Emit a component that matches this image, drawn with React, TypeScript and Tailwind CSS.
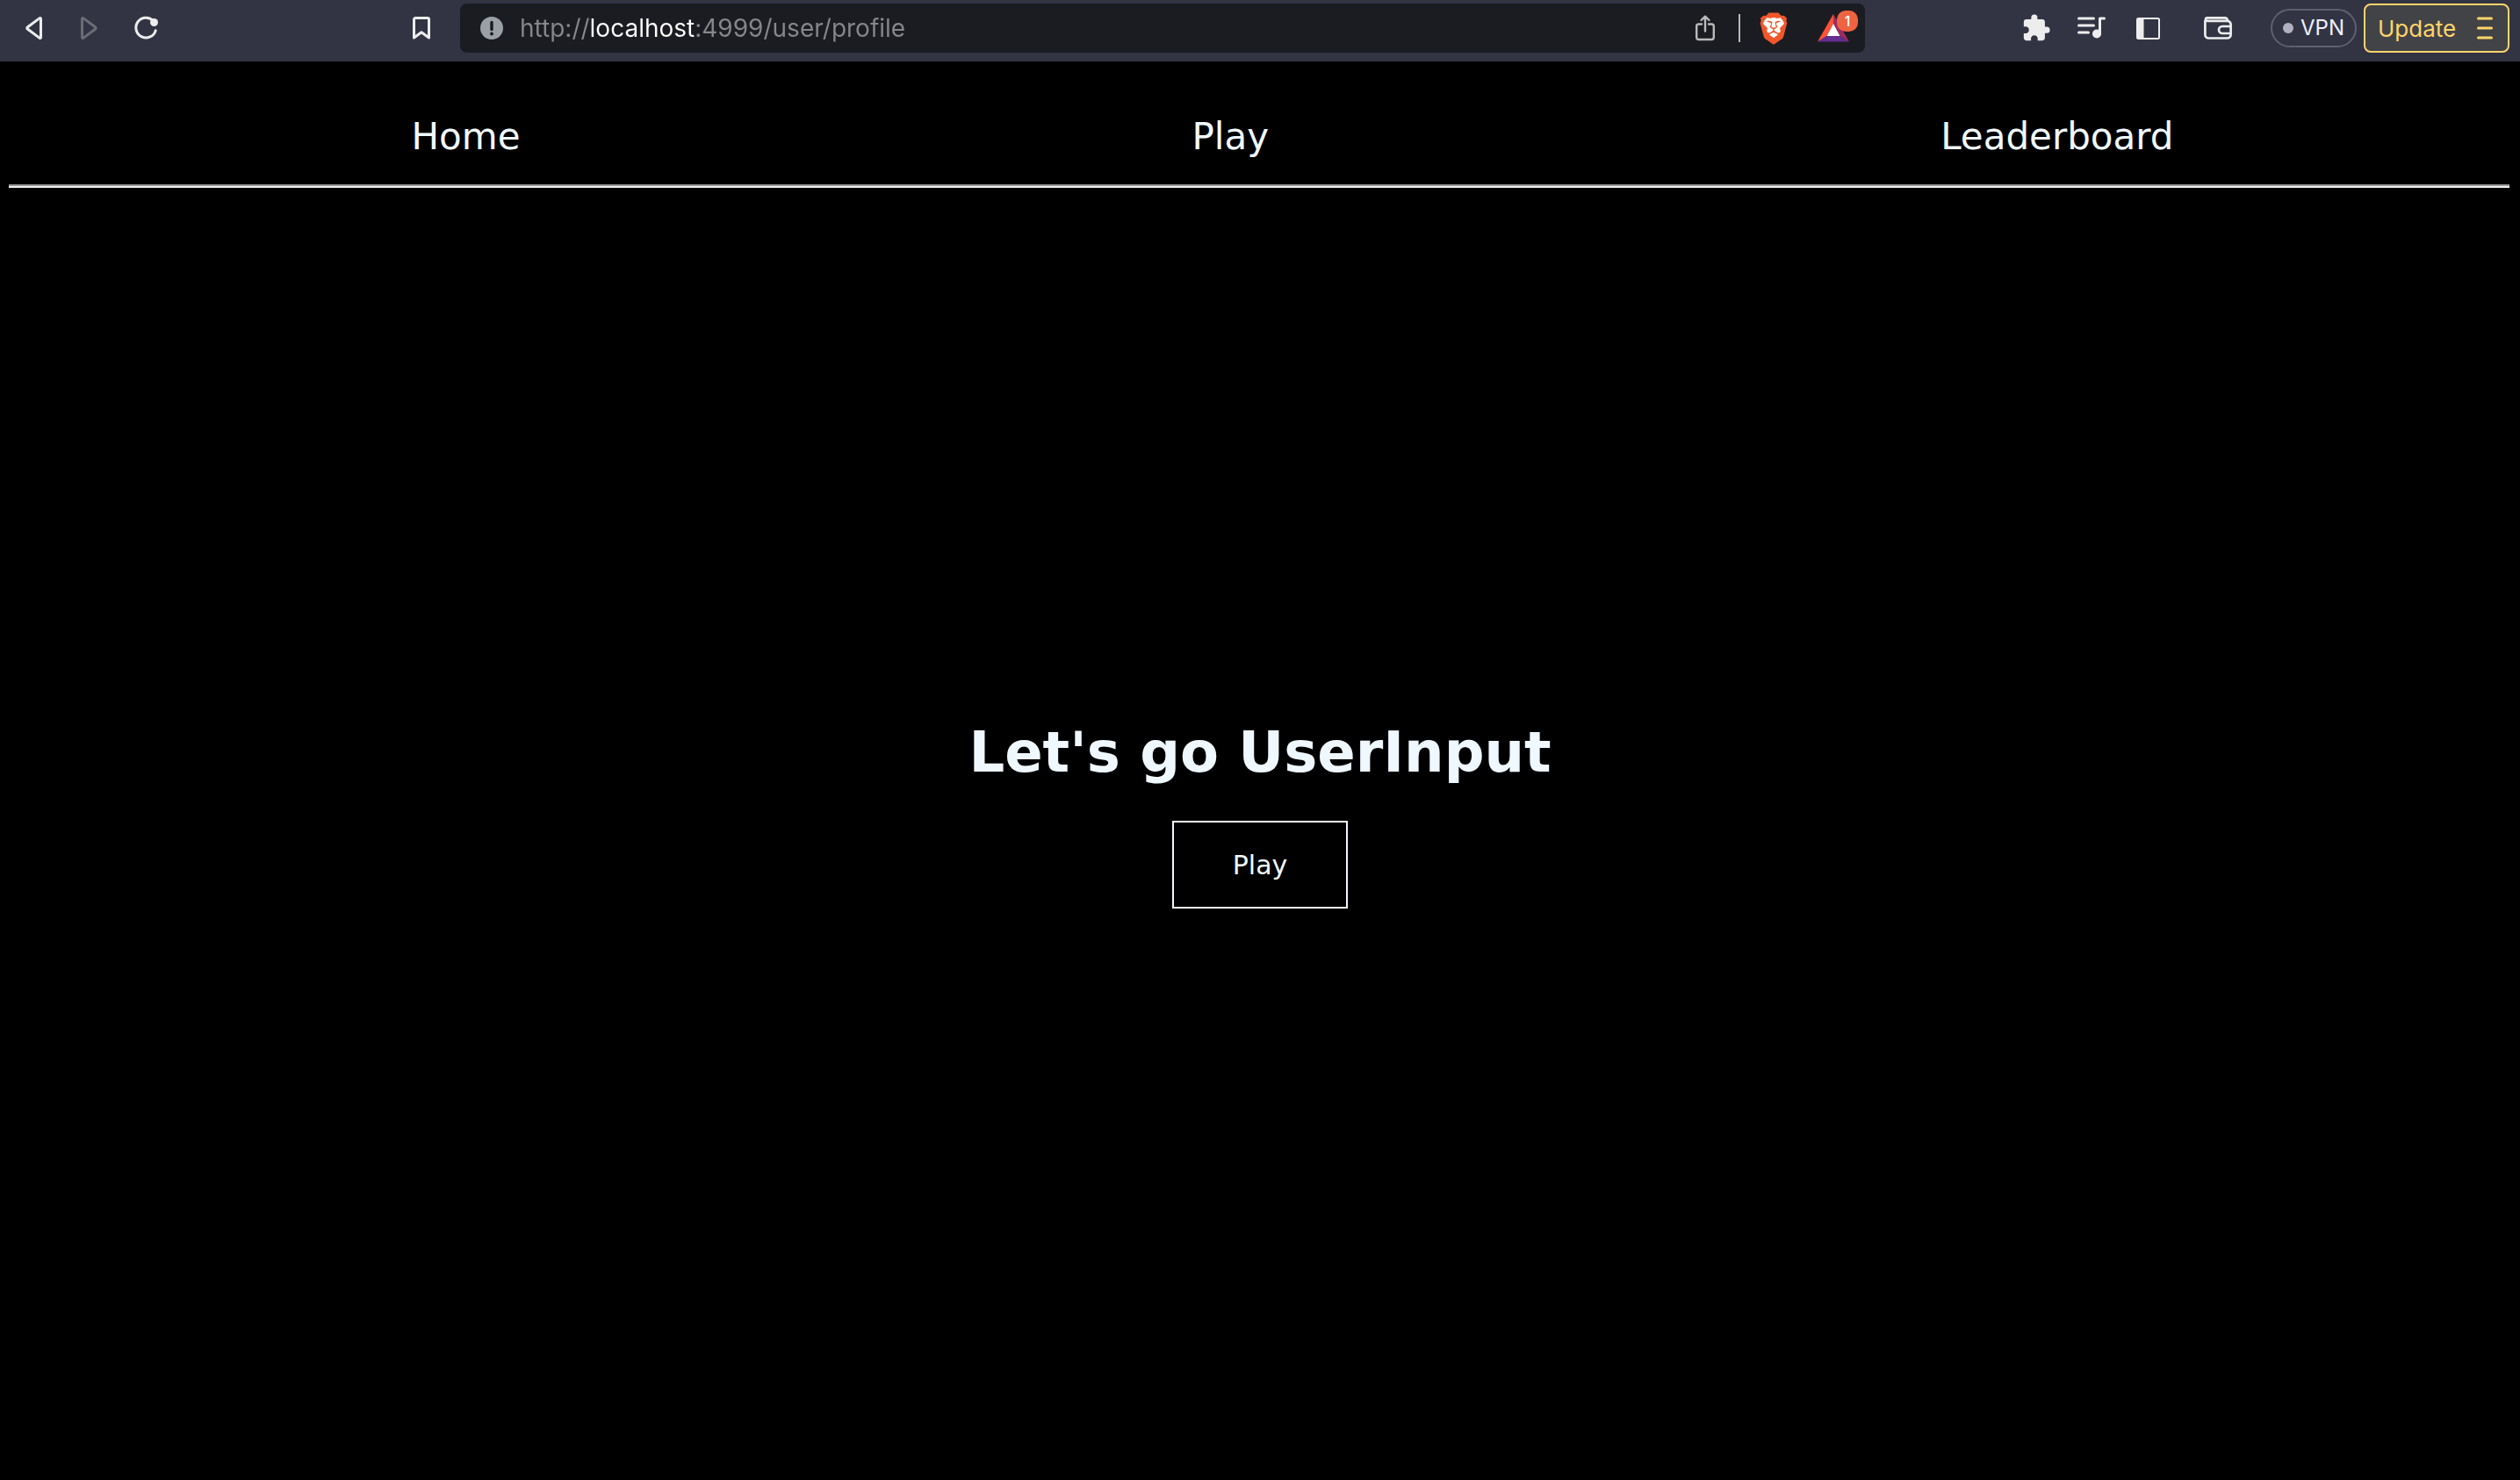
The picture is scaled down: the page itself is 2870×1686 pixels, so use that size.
import type { ReactNode } from "react";
import { MdExtension } from "react-icons/md";
import { SiBrave } from "react-icons/si";

function ToolButton({ label, className = "", children }: { label: string; className?: string; children: ReactNode }) {
  return (
    <button type="button" aria-label={label} className={`flex shrink-0 items-center justify-center ${className}`}>
      {children}
    </button>
  );
}

function TriangleIcon() {
  return (
    <svg width="24" height="28" viewBox="0 0 24 28" fill="none" stroke="currentColor" strokeWidth="3" strokeLinejoin="round">
      <path d="M20.5 3.2v21.6a.8.8 0 0 1-1.3.6L5.300 15a1.2 1.2 0 0 1 0-2L19.200 2.6a.8.8 0 0 1 1.3.6Z" />
    </svg>
  );
}

function ReloadIcon() {
  return (
    <svg width="28" height="28" viewBox="0 0 28 28" fill="none">
      <path d="M22 5.2A11.4 11.4 0 1 0 25.2 16.8" stroke="currentColor" strokeWidth="3" strokeLinecap="round" />
      <circle cx="23.5" cy="7.5" r="4.5" fill="currentColor" />
    </svg>
  );
}

function BookmarkIcon() {
  return (
    <svg width="20" height="26" viewBox="0 0 20 26" fill="none" stroke="currentColor" strokeWidth="3" strokeLinejoin="round" overflow="hidden">
      <path d="M1.5 3A1.5 1.5 0 0 1 3 1.5h14A1.5 1.5 0 0 1 18.5 3v21L10 17.800 1.5 24Z" />
    </svg>
  );
}

function InfoIcon() {
  return (
    <svg width="26" height="26" viewBox="0 0 26 26" className="shrink-0">
      <circle cx="13" cy="13" r="13" fill="#9aa0a6" />
      <path d="M13 6.5v8" stroke="#1b1c21" strokeWidth="3.4" strokeLinecap="round" />
      <circle cx="13" cy="19.5" r="1.9" fill="#1b1c21" />
    </svg>
  );
}

function ShareIcon() {
  return (
    <svg width="22" height="30" viewBox="0 0 22 30" fill="none" stroke="#b9bab9" strokeWidth="2.4" strokeLinecap="round" strokeLinejoin="round">
      <path d="M7 10.5H3.7A2.5 2.5 0 0 0 1.200 13v12.5A2.5 2.5 0 0 0 3.700 28h14.600a2.5 2.5 0 0 0 2.5-2.5V13a2.5 2.5 0 0 0-2.5-2.5H15M11 18.5V2M6.5 6 11 1.700 15.500 6" />
    </svg>
  );
}

function RewardsIcon() {
  return (
    <svg width="36" height="32" viewBox="0 0 36 32">
      <path d="M18 0v11L10.500 25 0 31.500Z" fill="#ff5235" />
      <path d="M18 0v11l7.500 14L36 31.500Z" fill="#9e2a63" />
      <path d="M0 31.500 10.500 25h15L36 31.500Z" fill="#662d91" />
      <path d="M18 11 10.500 25h15Z" fill="#fff" />
    </svg>
  );
}

function PlaylistIcon() {
  return (
    <svg width="32" height="26" viewBox="0 0 32 26" fill="none" stroke="currentColor" strokeWidth="3" strokeLinecap="round" strokeLinejoin="round">
      <path d="M1.500 2h17M1.500 10h17M1.500 18h11M25.500 19.500V2h5" />
      <circle cx="22" cy="19.500" r="5" fill="currentColor" stroke="none" />
    </svg>
  );
}

function PanelIcon() {
  return (
    <svg width="27" height="25" viewBox="0 0 27 25">
      <rect x="1" y="1" width="25" height="23" rx="1.500" fill="none" stroke="currentColor" strokeWidth="2" />
      <path d="M1 1h7.500v23H1Z" fill="currentColor" />
    </svg>
  );
}

function WalletIcon() {
  return (
    <svg width="32" height="26" viewBox="0 0 32 26" fill="none" stroke="currentColor" strokeWidth="2.700" strokeLinejoin="round">
      <path d="M1.400 4v16.500a4 4 0 0 0 4 4h21.200a4 4 0 0 0 4-4V8.800a4 4 0 0 0-4-4H3.700A1.700 1.700 0 0 1 3.700 1.400H24a3 3 0 0 1 3 3.300" />
      <path d="M30.600 11H21a4 4 0 0 0 0 8h9.600" />
    </svg>
  );
}

function MenuIcon() {
  return (
    <svg width="18" height="26" viewBox="0 0 18 26" stroke="currentColor" strokeWidth="3" strokeLinecap="round">
      <path d="M1.500 2h15M1.500 13h15M1.500 24h15" />
    </svg>
  );
}

function BrowserBar() {
  return (
    <header className="flex h-[70px] shrink-0 items-start bg-[#323443] font-[Inter,sans-serif] text-[#ededee]">
      <div className="flex h-16 items-center">
        <ToolButton label="Back" className="ml-[26px]"><TriangleIcon /></ToolButton>
        <ToolButton label="Forward" className="ml-10 rotate-180 text-[#6b6c76]"><TriangleIcon /></ToolButton>
        <ToolButton label="Reload" className="ml-[38px]"><ReloadIcon /></ToolButton>
      </div>
      <div className="ml-[290px] flex h-16 items-center">
        <ToolButton label="Bookmark this page"><BookmarkIcon /></ToolButton>
      </div>
      <div className="mt-1 ml-[34px] flex h-14 min-w-0 flex-1 items-center rounded-lg bg-[#1b1c21]">
        <ToolButton label="Site information" className="ml-[23px]"><InfoIcon /></ToolButton>
        <input
          type="text"
          aria-label="Address"
          defaultValue="http://localhost:4999/user/profile"
          spellCheck={false}
          className="ml-[19px] h-10 min-w-0 flex-1 bg-[linear-gradient(to_right,#86878b_79px,#ffffff_79px,#ffffff_200px,#86878b_200px)] bg-clip-text text-[28px] text-transparent outline-none"
        />
        <ToolButton label="Share"><ShareIcon /></ToolButton>
        <div className="ml-[27px] h-8 w-0.5 bg-[#b9bab9]" />
        <button type="button" aria-label="Brave Shields" className="relative ml-5 flex h-10 w-9 shrink-0 items-center justify-center">
          <svg viewBox="0 0 32 36" width="32" height="36" className="absolute">
            <path d="M6 6h20l3 8-4 14-9 6-9-6-4-14Z" fill="#fff" />
          </svg>
          <SiBrave size={37} color="#f0562a" className="relative" />
        </button>
        <button type="button" aria-label="Brave Rewards, 1 notification" className="relative mr-[18px] ml-8 flex h-10 shrink-0 items-center">
          <RewardsIcon />
          <span className="absolute top-0 -right-2.5 flex size-6 items-center justify-center rounded-[10px] bg-[#ee6340] text-base font-medium text-white">1</span>
        </button>
      </div>
      <div className="mr-3 ml-[178px] flex h-16 items-center">
        <ToolButton label="Extensions"><MdExtension size={34} /></ToolButton>
        <ToolButton label="Media" className="ml-[30px]"><PlaylistIcon /></ToolButton>
        <ToolButton label="Side panel" className="ml-[35px]"><PanelIcon /></ToolButton>
        <ToolButton label="Wallet" className="ml-[50px]"><WalletIcon /></ToolButton>
        <button type="button" className="ml-[44px] flex h-11 w-[98px] items-center justify-center gap-2 rounded-full border-2 border-[#5f606e] text-2xl text-[#f0f0ff]">
          <span className="size-3 rounded-full bg-[#b0b0c0]" />
          VPN
        </button>
        <button type="button" className="ml-2 flex h-14 w-[166px] items-center justify-between rounded-lg border-2 border-[#ffd56b] bg-[#424347] pr-[17px] pl-[14px] text-[26px] text-[#ffd56b]">
          Update
          <MenuIcon />
        </button>
      </div>
    </header>
  );
}

const links = [
  { label: "Home", href: "#home" },
  { label: "Play", href: "#play" },
  { label: "Leaderboard", href: "#leaderboard" },
];

export default function App() {
  return (
    <div className="flex min-h-screen flex-col bg-black font-['DejaVu_Sans',sans-serif] text-[#f0f8ff]">
      <BrowserBar />
      <nav className="mr-3 ml-2.5 border-b-2 border-[#eeeeee]">
        <ul className="flex h-[142px] items-center justify-around border-b-2 border-[#9a9a9a] pt-8 pl-[76px] text-[42px] leading-none">
          {links.map((link) => (
            <li key={link.label}>
              <a href={link.href}>{link.label}</a>
            </li>
          ))}
        </ul>
      </nav>
      <main className="flex flex-1 flex-col items-center justify-center gap-10 pb-[46px]">
        <h1 className="text-[64px] leading-[76px] font-bold">Let's go UserInput</h1>
        <button type="button" className="h-[100px] w-[200px] border-2 border-[#f0f8ff] text-[30px]">
          Play
        </button>
      </main>
    </div>
  );
}
